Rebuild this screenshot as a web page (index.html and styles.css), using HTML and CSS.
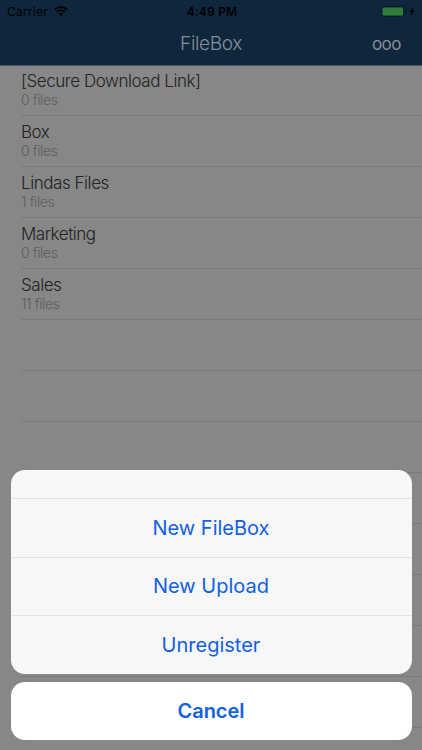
FILE: index.html
```html
<!DOCTYPE html>
<html lang="en">
<head>
<meta charset="utf-8">
<title>FileBox</title>
<link rel="stylesheet" href="styles.css">
</head>
<body>
<div class="screen">
  <header class="header">
    <div class="status">
      <div class="carrier"><span class="carrier-name">Carrier</span>
        <svg class="wifi" width="14" height="10" viewBox="0 0 14 10"><path d="M.9 3.6C4.4.3 9.6.3 13.1 3.6M3 5.9c2.3-2.1 5.7-2.1 8 0" fill="none" stroke="#000" stroke-width="1.8"/><path d="M7 10 4.6 7.6c1.4-1.2 3.4-1.2 4.8 0z"/></svg>
      </div>
      <span class="clock">4:49 PM</span>
      <div class="power">
        <svg width="36" height="11" viewBox="0 0 36 11"><rect x=".5" y=".5" width="22.5" height="10" rx="2.5" fill="none" stroke="#091b2b"/><rect x="1.5" y="1.5" width="20.5" height="8" rx="1.3" fill="#2d7d38"/><path d="M24.3 3.8c1.3.5 1.3 2.9 0 3.4z" fill="#071524"/><path d="M32.7 1.2 28.4 6h2.3l-1 3.8L34 4.7h-2.4z"/></svg>
      </div>
    </div>
    <div class="navbar">
      <h1 class="title">FileBox</h1>
      <span class="more">ooo</span>
    </div>
  </header>
  <main class="list">
    <div class="row"><span class="name secure">[Secure Download Link]</span><span class="count">0 files</span></div>
    <div class="row"><span class="name">Box</span><span class="count">0 files</span></div>
    <div class="row"><span class="name">Lindas Files</span><span class="count">1 files</span></div>
    <div class="row"><span class="name">Marketing</span><span class="count">0 files</span></div>
    <div class="row"><span class="name">Sales</span><span class="count">11 files</span></div>
    <div class="row"></div><div class="row"></div><div class="row"></div><div class="row"></div>
    <div class="row"></div><div class="row"></div><div class="row"></div><div class="row"></div><div class="row"></div>
  </main>
  <div class="sheet">
    <div class="actions">
      <div class="sheet-header"></div>
      <div class="action"><span class="l1">New FileBox</span></div>
      <div class="action"><span class="l2">New Upload</span></div>
      <div class="action"><span class="l3">Unregister</span></div>
    </div>
    <div class="cancel"><span>Cancel</span></div>
  </div>
</div>
</body>
</html>
```
FILE: styles.css
```css
* { box-sizing: border-box; }
body { margin: 0; font-family: Inter, "Liberation Sans", sans-serif; }
.screen { position: relative; width: 422px; height: 750px; overflow: hidden; background: #878787; }
.header { height: 66px; background: #0f263d; border-bottom: 1px solid #46536a; }
.status { display: grid; grid-template-columns: 1fr auto 1fr; align-items: center; height: 22px; padding: 0 5px 0 7px; color: #000; font-size: 12px; }
.carrier { display: flex; align-items: center; gap: 6px; }
.carrier-name { letter-spacing: .22px; }
.wifi { display: block; }
.clock { font-weight: 600; letter-spacing: .2px; }
.power { display: flex; justify-content: flex-end; }
.power svg { display: block; }
.navbar { display: grid; grid-template-columns: 1fr auto 1fr; align-items: center; height: 43px; padding: 0 21px; color: #878f98; }
.title { grid-column: 2; margin: 0; font-size: 19px; font-weight: 300; letter-spacing: -.35px; }
.more { justify-self: end; font-size: 17px; font-weight: 400; letter-spacing: -.5px; }
.list { padding-left: 21px; }
.row { display: flex; flex-direction: column; height: 51px; padding-top: 5px; border-bottom: 1px solid #7a7a7b; }
.row:first-child { height: 50px; padding-top: 4px; }
.name { font-size: 17px; line-height: 22px; font-weight: 300; letter-spacing: -.45px; color: #222; }
.count { font-size: 14px; line-height: 15px; font-weight: 300; letter-spacing: -.4px; color: #5d5d5d; }
.sheet { position: absolute; left: 10.5px; right: 10.5px; bottom: 10.5px; display: flex; flex-direction: column; gap: 8px; color: #1260e2; font-size: 20px; text-align: center; }
.actions { overflow: hidden; border-radius: 14px; background: #f7f7f7; }
.sheet-header { height: 28.5px; }
.action { display: flex; align-items: center; justify-content: center; height: 58.4px; border-top: 1px solid #e3e4e6; }
.cancel { display: flex; align-items: center; justify-content: center; height: 58px; border-radius: 14px; background: #fff; font-weight: 600; }
```
